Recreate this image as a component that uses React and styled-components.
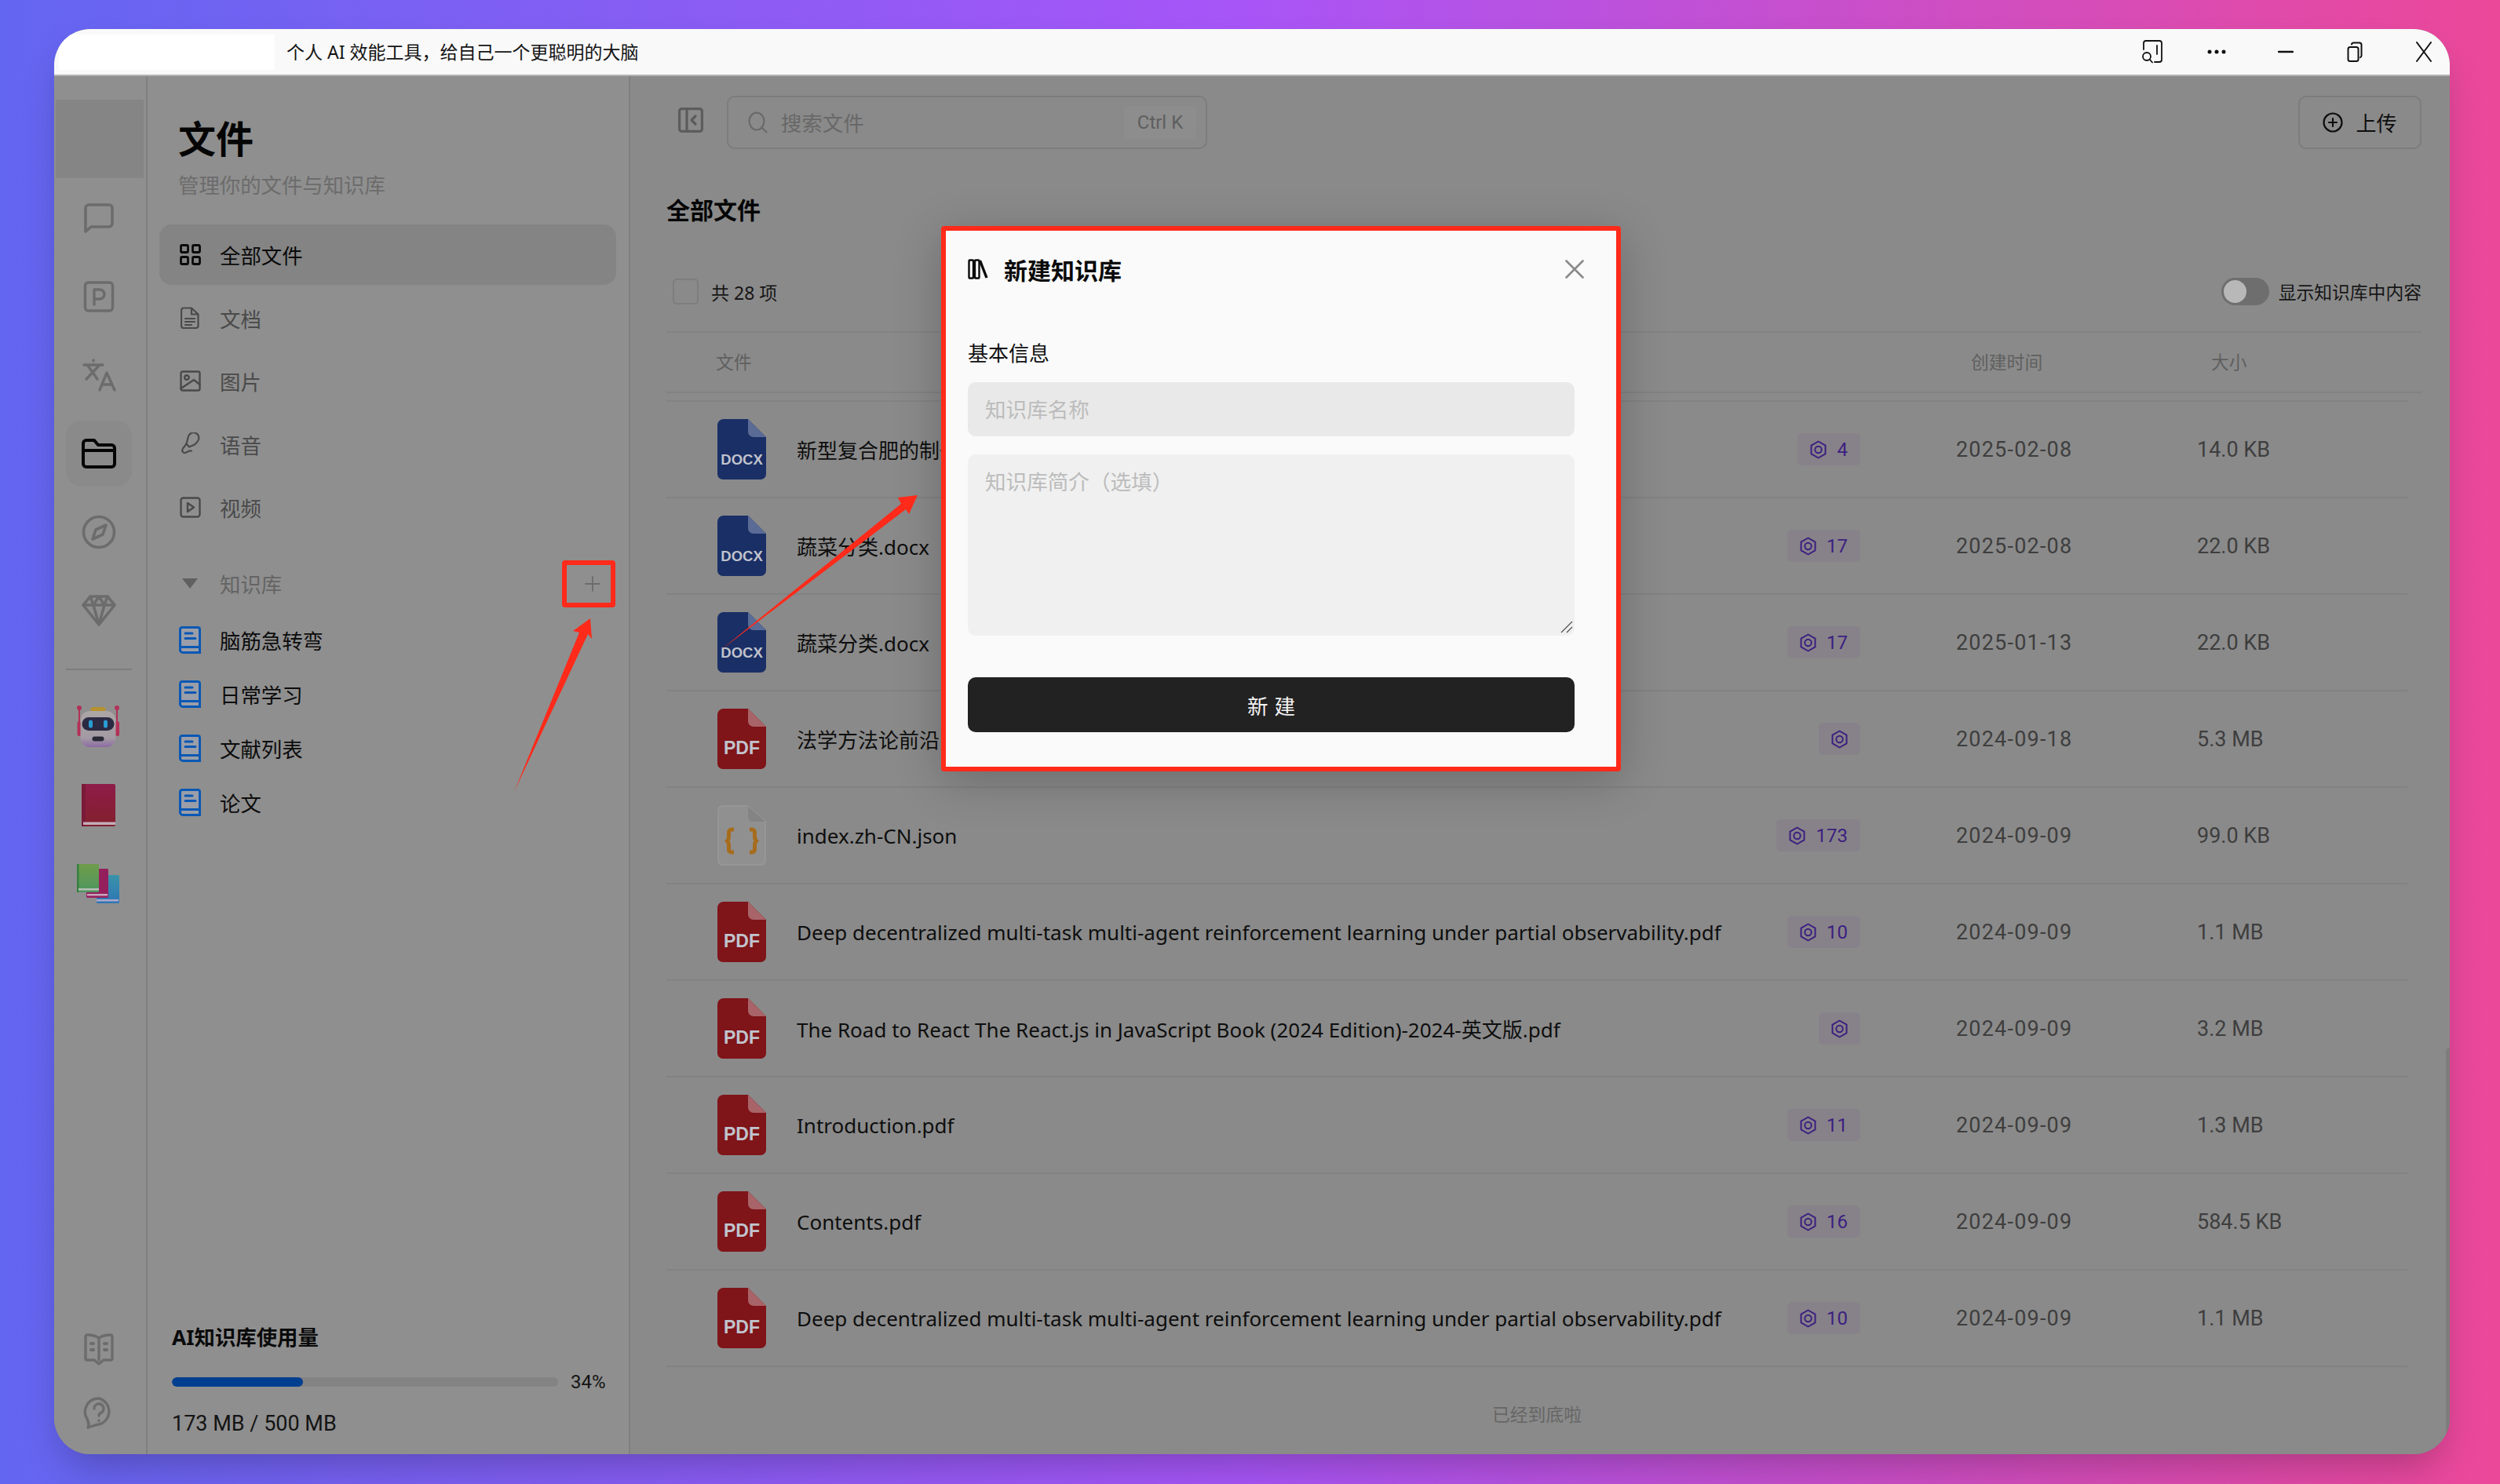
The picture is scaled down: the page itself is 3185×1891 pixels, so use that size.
import React from "react";
import styled, { createGlobalStyle } from "styled-components";

const Global = createGlobalStyle`
  html, body { margin: 0; padding: 0; }
  body { font-family: "Noto Sans", "Noto Sans CJK SC", sans-serif; color: #111; }
  * { box-sizing: border-box; }
`;

const Stage = styled.div`
  position: relative;
  width: 3185px;
  height: 1891px;
  padding: 37px 64px 38px 69px;
  background: linear-gradient(to right, #6366f1, #a855f7, #ec4899);
  overflow: hidden;
`;
const Win = styled.div`
  height: 100%;
  display: flex;
  flex-direction: column;
  border-radius: 46px;
  overflow: hidden;
  background: #8a8a8a;
  box-shadow: 0 25px 50px -12px rgba(0, 0, 0, 0.25);
`;
const TitleBar = styled.header`
  height: 60px;
  flex: none;
  display: flex;
  align-items: center;
  background: #f9f9f9;
  border-bottom: 2px solid #b4b4b4;
  padding-right: 19px;
`;
const Redact = styled.div`
  width: 275px;
  height: 45px;
  margin: 0 15px 0 6px;
  background: #fff;
`;
const Slogan = styled.div`
  flex: 1;
  font-size: 23px;
  line-height: 32px;
  color: #141414;
`;
const WinBtns = styled.div`
  display: flex;
  align-items: center;
  gap: 60px;
`;
const WinBtn = styled.span`
  width: 28px;
  height: 30px;
  display: flex;
  align-items: center;
  justify-content: center;
  color: #111;
  &:first-child { margin-right: -6px; }
`;

const Body = styled.div`
  flex: 1;
  min-height: 0;
  display: flex;
`;

const Rail = styled.nav`
  width: 119px;
  flex: none;
  background: #8f8f8f;
  border-right: 2px solid #7f7f7f;
  padding: 30px 4px 13px 0;
  display: flex;
  flex-direction: column;
  align-items: center;
`;
const RailLogo = styled.div`
  width: 112px;
  height: 100px;
  flex: none;
  background: #858585;
  margin: 0 0 1px 3px;
`;
const RailSlot = styled.div`
  width: 84px;
  height: ${(p) => p.$h || 100}px;
  display: flex;
  align-items: center;
  justify-content: center;
  color: #6c6c6c;
  flex: none;
`;
const RailActive = styled.div`
  width: 84px;
  height: 84px;
  border-radius: 20px;
  background: #8a8a8a;
  display: flex;
  align-items: center;
  justify-content: center;
  color: #050505;
`;
const RailDivider = styled.div`
  width: 84px;
  height: 2px;
  background: #7d7d7d;
  margin: 24px 0 22px;
  flex: none;
`;
const RailBottom = styled.div`
  margin-top: auto;
  display: flex;
  flex-direction: column;
`;

const Side = styled.aside`
  width: 615px;
  flex: none;
  background: #8f8f8f;
  border-right: 2px solid #7f7f7f;
  padding: 50px 16px 21px 15px;
  display: flex;
  flex-direction: column;
`;
const SideTitle = styled.h1`
  margin: 0 0 0 24px;
  font-size: 48px;
  line-height: 60px;
  font-weight: 700;
  color: #050505;
`;
const SideSub = styled.p`
  margin: 11px 0 32px 24px;
  font-size: 26.4px;
  line-height: 36px;
  color: #6c6c6c;
`;
const NavItem = styled.div`
  height: 77px;
  margin-bottom: 3.6px;
  border-radius: 16px;
  padding-left: 25px;
  display: flex;
  align-items: center;
  gap: 24px;
  font-size: 26.4px;
  background: ${(p) => (p.$active ? "#848484" : "transparent")};
  color: ${(p) => (p.$active ? "#0a0a0a" : "#4a4a4a")};
`;
const IconSlot = styled.span`
  width: 28px;
  height: 36px;
  flex: none;
  display: flex;
  align-items: center;
  justify-content: center;
`;
const KbHead = styled.div`
  height: 60px;
  margin-top: 25px;
  margin-bottom: 7px;
  padding-left: 25px;
  display: flex;
  align-items: center;
  gap: 24px;
  font-size: 26.4px;
  color: #646464;
`;
const KbName = styled.span`
  flex: 1;
`;
const AddBox = styled.span`
  width: 68px;
  height: 60px;
  margin-right: 1px;
  border: 6px solid #ff2a1a;
  border-radius: 4px;
  display: flex;
  align-items: center;
  justify-content: center;
  padding-left: 10px;
  color: #6c6c6c;
`;
const KbItem = styled.div`
  height: 69px;
  padding-left: 25px;
  display: flex;
  align-items: center;
  gap: 24px;
  font-size: 26.4px;
  color: #0c0c0c;
`;
const Usage = styled.div`
  margin-top: auto;
  padding-left: 16px;
`;
const UsageTitle = styled.div`
  font-size: 26.4px;
  line-height: 36px;
  font-weight: 700;
  color: #0a0a0a;
`;
const UsageRow = styled.div`
  height: 30px;
  margin-top: 24px;
  display: flex;
  align-items: center;
  gap: 16px;
`;
const Track = styled.div`
  width: 492px;
  height: 12px;
  border-radius: 6px;
  background: #838383;
  overflow: hidden;
`;
const Fill = styled.div`
  height: 100%;
  border-radius: 6px;
  background: #003f8f;
`;
const Pct = styled.span`
  font-family: Roboto, sans-serif;
  font-size: 24px;
  color: #141414;
`;
const UsageTotal = styled.div`
  margin-top: 20px;
  font-family: Roboto, sans-serif;
  font-size: 27px;
  line-height: 36px;
  color: #141414;
`;

const Main = styled.main`
  position: relative;
  flex: 1;
  min-width: 0;
  background: #8a8a8a;
  padding: 25px 36px 0 46px;
  display: flex;
  flex-direction: column;
`;
const TopBar = styled.div`
  height: 68px;
  display: flex;
  align-items: center;
`;
const PanelBtn = styled.span`
  width: 32px;
  margin: -6px 30px 0 15px;
  height: 32px;
  color: #5c5c5c;
  display: flex;
`;
const Search = styled.div`
  width: 612px;
  height: 68px;
  border: 2px solid #7c7c7c;
  border-radius: 10px;
  padding: 0 12px 0 25px;
  display: flex;
  align-items: center;
  gap: 17px;
  font-size: 26.4px;
  color: #686868;
`;
const SearchText = styled.span`
  flex: 1;
  margin-top: -2px;
`;
const Kbd = styled.span`
  width: 92px;
  height: 42px;
  background: #8d8d8d;
  border-radius: 6px;
  display: flex;
  align-items: center;
  justify-content: center;
  font-family: Roboto, sans-serif;
  font-size: 24px;
  color: #5e5e5e;
`;
const Upload = styled.button`
  margin-left: auto;
  width: 157px;
  height: 68px;
  border: 2.5px solid #7c7c7c;
  border-radius: 10px;
  background: transparent;
  display: flex;
  align-items: center;
  justify-content: center;
  gap: 16px;
  font: inherit;
  font-size: 26px;
  color: #0e0e0e;
  padding: 0;
`;
const Heading = styled.h2`
  margin: 58px 0 0;
  font-size: 30px;
  line-height: 40px;
  font-weight: 700;
  color: #050505;
`;
const CountRow = styled.div`
  height: 35px;
  margin-top: 66px;
  padding-left: 8px;
  display: flex;
  align-items: center;
`;
const Check = styled.span`
  width: 33px;
  height: 33px;
  border: 2px solid #7d7d7d;
  border-radius: 5px;
  margin-right: 16px;
`;
const CountText = styled.span`
  flex: 1;
  font-size: 23px;
  color: #161616;
`;
const ToggleTrack = styled.span`
  width: 61px;
  height: 35px;
  border-radius: 18px;
  background: #6e6e6e;
  padding: 3px;
  margin-right: 12px;
  display: flex;
`;
const Knob = styled.span`
  width: 29px;
  height: 29px;
  border-radius: 50%;
  background: #b8b8b8;
`;
const ToggleLabel = styled.span`
  font-size: 22.8px;
  color: #161616;
`;
const Header = styled.div`
  height: 79px;
  margin-top: 33px;
  padding-bottom: 3px;
  border-top: 2px solid #828282;
  border-bottom: 2px solid #828282;
  display: grid;
  grid-template-columns: 1fr 122px 307px 286px;
  align-items: center;
  font-size: 22.8px;
  color: #606060;
`;
const HeadName = styled.span`
  padding-left: 63px;
`;
const HeadDate = styled.span`
  grid-column: 3;
  padding-left: 19px;
`;
const HeadSize = styled.span`
  padding-left: 18px;
`;
const List = styled.div`
  margin-top: 9px;
  margin-right: 18px;
  border-top: 2px solid #828282;
`;
const Row = styled.div`
  height: 123px;
  border-bottom: 2px solid #828282;
  display: grid;
  grid-template-columns: 1fr 122px 307px 268px;
  align-items: center;
  color: #3e3e3e;
`;
const NameCell = styled.div`
  display: flex;
  align-items: center;
  justify-content: space-between;
  padding-left: 65px;
  min-width: 0;
`;
const NameWrap = styled.div`
  display: flex;
  align-items: center;
  gap: 39px;
  min-width: 0;
`;
const FileName = styled.span`
  font-size: 26px;
  color: #0e0e0e;
  white-space: nowrap;
`;
const Tag = styled.span`
  height: 41px;
  padding: 0 16px;
  border-radius: 6px;
  background: #878289;
  color: #3c1f80;
  display: flex;
  align-items: center;
  gap: 13px;
  font-family: Roboto, sans-serif;
  font-size: 24px;
  flex: none;
`;
const DateCell = styled.span`
  grid-column: 3;
  font-family: Roboto, sans-serif;
  font-size: 27px;
  letter-spacing: 1.2px;
`;
const Size = styled.span`
  font-family: Roboto, sans-serif;
  font-size: 27px;
`;
const EndNote = styled.div`
  text-align: center;
  margin-top: 43px;
  margin-right: 18px;
  font-size: 22.8px;
  color: #666;
`;
const Thumb = styled.div`
  position: absolute;
  right: 0;
  top: 1238px;
  bottom: 0;
  width: 5px;
  border-radius: 5px 0 0 0;
  background: #7d7d7d;
`;

const ModalBox = styled.section`
  position: absolute;
  left: 1199px;
  top: 288px;
  width: 866px;
  height: 695px;
  border: 6px solid #ff2a1a;
  border-radius: 4px;
  background: #fafafa;
  padding: 29px 53px 0 28px;
  box-shadow: 0 12px 60px rgba(0, 0, 0, 0.22);
`;
const ModalHead = styled.div`
  height: 40px;
  display: flex;
  align-items: center;
  gap: 20px;
`;
const ModalTitle = styled.h3`
  flex: 1;
  margin: 0;
  font-size: 30px;
  font-weight: 700;
  color: #0a0a0a;
`;
const CloseIcon = styled.svg`
  margin-right: -12px;
`;
const SectionLabel = styled.div`
  margin-top: 69px;
  font-size: 26px;
  line-height: 36px;
  color: #111;
`;
const NameInput = styled.input`
  display: block;
  width: 100%;
  height: 69px;
  margin-top: 19px;
  padding: 0 22px;
  border: 0;
  border-radius: 10px;
  background: #e9e9e9;
  font: inherit;
  font-size: 26.6px;
  outline: none;
  &::placeholder { color: #bcbcbc; opacity: 1; }
`;
const IntroWrap = styled.div`
  position: relative;
  height: 231px;
  margin-top: 23px;
`;
const Intro = styled.textarea`
  display: block;
  width: 100%;
  height: 100%;
  padding: 17px 22px;
  border: 0;
  border-radius: 10px;
  background: #f0f0f0;
  font: inherit;
  font-size: 26.6px;
  line-height: 36px;
  outline: none;
  resize: none;
  &::placeholder { color: #bcbcbc; opacity: 1; }
`;
const Grip = styled.svg`
  position: absolute;
  right: 2px;
  bottom: 3px;
`;
const Submit = styled.button`
  display: block;
  width: 100%;
  height: 70px;
  margin-top: 53px;
  border: 0;
  border-radius: 10px;
  background: #222;
  color: #f2f2f2;
  font: inherit;
  font-size: 26.6px;
  letter-spacing: 8px;
  padding: 0 0 0 8px;
`;
const Arrows = styled.svg`
  position: absolute;
  left: 0;
  top: 0;
  pointer-events: none;
`;

const S = ({ w = 36, h = 36, vb = "0 0 24 24", sw = 2, children, fill = "none" }) => (
  <svg width={w} height={h} viewBox={vb} fill={fill} stroke="currentColor" strokeWidth={sw} strokeLinecap="round" strokeLinejoin="round">
    {children}
  </svg>
);

const Chat = () => (
  <S w={40} h={40} vb="0 0 40 40" sw={3.6}><path d="M3 37V7a4 4 0 0 1 4-4h26a4 4 0 0 1 4 4v20a4 4 0 0 1-4 4H10z" /></S>
);
const PBox = () => (
  <S w={40} h={40} vb="0 0 40 40" sw={3.4}><rect x="2.5" y="2" width="35" height="36" rx="4" /><path d="M14 30V11h7a5.5 5.5 0 0 1 0 12h-7" /></S>
);
const Translate = () => (
  <S w={44} h={44} vb="0 0 44 44" sw={3.4}>
    <path d="M3 9h24M15 3v1M8 10l12 17M22 10 6 27" />
    <path d="M23 41 32 19l10 22M26 34h13" />
  </S>
);
const Folder = () => (
  <S w={44} h={38} vb="0 0 44 38" sw={4}>
    <path d="M2 9V6a4 4 0 0 1 4-4h10l5 6h17a4 4 0 0 1 4 4v20a4 4 0 0 1-4 4H6a4 4 0 0 1-4-4z" />
    <path d="M2 15h40" />
  </S>
);
const Compass = () => (
  <S w={44} h={44} vb="0 0 44 44" sw={3.6}>
    <circle cx="22" cy="22" r="19.5" />
    <path d="M31 13l-4 12-13 6 4-12z" />
  </S>
);
const Gem = () => (
  <S w={44} h={42} vb="0 0 44 42" sw={3.6}>
    <path d="M11 3h22l9 11-20 25L2 14zM2 14h40M15 14l7 25 7-25M11 3l4 11 7-11 7 11 4-11" />
  </S>
);
const OpenBook = () => (
  <S w={38} h={42} vb="0 0 38 42" sw={3.4}>
    <path d="M19 6c-4-3-10-4-15-4a2 2 0 0 0-2 2v28a2 2 0 0 0 2 2h9l6 5 6-5h9a2 2 0 0 0 2-2V4a2 2 0 0 0-2-2c-5 0-11 1-15 4zM19 6v28" />
    <path d="M9 13h3M9 21h3M26 13h3M26 21h3" strokeWidth="4" />
  </S>
);
const Help = () => (
  <S w={40} h={42} vb="0 0 40 42" sw={3.4}>
    <path d="M20 3a17 17 0 0 1 0 33c-4 0-9 3-14 4 2-3 1-6-1-11A17 17 0 0 1 20 3z" />
    <path d="M14 16a6 6 0 1 1 9 5c-2 1-3 2-3 4M20 31v.2" />
  </S>
);

const GridIc = () => (
  <S w={27} h={27} vb="0 0 27 27" sw={2.8}>
    <rect x="1.5" y="1.5" width="9" height="9" rx="1.5" /><rect x="16.5" y="1.5" width="9" height="9" rx="1.5" />
    <rect x="1.5" y="16.5" width="9" height="9" rx="1.5" /><rect x="16.5" y="16.5" width="9" height="9" rx="1.5" />
  </S>
);
const DocIc = () => (
  <S w={24} h={28} vb="0 0 24 28" sw={2.2}>
    <path d="M4 1.5h10l8.5 8V24a3 3 0 0 1-3 3H4a3 3 0 0 1-3-3V4.5a3 3 0 0 1 3-3zM14 1.5v8h8.5M6 15h12M6 19h12M6 23h8" />
  </S>
);
const ImgIc = () => (
  <S w={27} h={27} vb="0 0 27 27" sw={2.4}>
    <rect x="1.5" y="1.5" width="24" height="24" rx="2" />
    <circle cx="9" cy="9" r="2.8" />
    <path d="M1.5 23 18 12l7.5 6" />
  </S>
);
const MicIc = () => (
  <S w={25} h={30} vb="0 0 25 30" sw={2.2}>
    <path d="M10 5a6.8 6.8 0 0 1 13 4c-1 3-3 5-5 6.500l-7 3-3.500-4z" />
    <path d="M7.500 14.500 3 20.500c-2 3 0 6 3 5.500 3-1 5-3 8-2.500" />
  </S>
);
const PlayIc = () => (
  <S w={27} h={27} vb="0 0 27 27" sw={2.4}>
    <rect x="1.5" y="1.5" width="24" height="24" rx="3" />
    <path d="M10 8l8 5.500-8 5.500z" />
  </S>
);
const KbIcon = () => (
  <svg width="28" height="35" viewBox="0 0 28 35" fill="none">
    <path d="M4 1.5h20a2.5 2.5 0 0 1 2.500 2.500v29.500H5A3.500 3.500 0 0 1 1.500 30V4A2.500 2.500 0 0 1 4 1.500z" fill="#9a9ea8" stroke="#0a58b4" strokeWidth="3" />
    <path d="M2 26.500h24.500" stroke="#0a58b4" strokeWidth="3" />
    <path d="M8 9h9M8 15.500h13" stroke="#0a58b4" strokeWidth="3" strokeLinecap="round" />
  </svg>
);
const Hex = ({ size = 24 }) => (
  <svg width={size * 0.88} height={size} viewBox="0 0 21 24" fill="none" stroke="currentColor" strokeWidth="2" strokeLinejoin="round" style={{ flex: "none" }}>
    <path d="M10.500 1.500 19.500 6.700v10.600L10.500 22.500 1.500 17.300V6.700z" />
    <circle cx="10.500" cy="12" r="4.200" />
  </svg>
);
const FileIcon = ({ kind }) => {
  const c = { docx: ["#1a2f66", "#5a6c95", "DOCX", 18.5], pdf: ["#7f1419", "#a86468", "PDF", 23] }[kind];
  if (!c) {
    return (
      <svg width="62" height="77" viewBox="0 0 62 77" style={{ flex: "none" }}>
        <path d="M7 1h32l22 20v49a6 6 0 0 1-6 6H7a6 6 0 0 1-6-6V7a6 6 0 0 1 6-6z" fill="#909090" stroke="#969696" strokeWidth="2" />
        <path d="M39 1l22 20H45a6 6 0 0 1-6-6z" fill="#848484" />
        <path d="M21 31h-3a3.500 3.500 0 0 0-3.500 3.500v6c0 3-2 5-2 5s2 2 2 5v6a3.500 3.500 0 0 0 3.500 3.500h3M41 31h3a3.500 3.500 0 0 1 3.500 3.500v6c0 3 2 5 2 5s-2 2-2 5v6a3.500 3.500 0 0 1-3.500 3.500h-3" fill="none" stroke="#a66c1c" strokeWidth="5" />
      </svg>
    );
  }
  return (
    <svg width="62" height="77" viewBox="0 0 62 77" style={{ flex: "none" }}>
      <path d="M8 0h31l23 23v47a7 7 0 0 1-7 7H7a7 7 0 0 1-7-7V8a8 8 0 0 1 8-8z" fill={c[0]} />
      <path d="M39 0l23 23H46a7 7 0 0 1-7-7z" fill={c[1]} />
      <text x="31" y="58" textAnchor="middle" fontFamily="Liberation Sans, sans-serif" fontWeight="700" fontSize={c[3]} fill="#c0c3cc">{c[2]}</text>
    </svg>
  );
};
const Robot = () => (
  <svg width="55" height="55" viewBox="0 0 55 55">
    <defs>
      <linearGradient id="rb" x1="0" y1="0" x2="0" y2="1"><stop offset="0" stopColor="#ada6a6" /><stop offset="0.75" stopColor="#a39aa3" /><stop offset="1" stopColor="#8d6aa4" /></linearGradient>
    </defs>
    <path d="M3 4v30M51 4v30" stroke="#b23158" strokeWidth="2" />
    <circle cx="3" cy="3" r="3" fill="#b23158" /><circle cx="51" cy="3" r="3" fill="#b23158" />
    <rect x="0.5" y="20" width="5" height="19" rx="2.500" fill="#b23158" />
    <rect x="49" y="20" width="5" height="19" rx="2.500" fill="#b23158" />
    <rect x="17.500" y="2" width="19" height="7" rx="3.500" fill="#b5922c" />
    <rect x="4.500" y="7" width="45" height="46" rx="12" fill="url(#rb)" />
    <rect x="6.500" y="15" width="41" height="17" rx="8.500" fill="#2b2a42" />
    <rect x="15" y="18.500" width="5" height="10" rx="2.500" fill="#2a9cd4" />
    <rect x="34" y="18.500" width="5" height="10" rx="2.500" fill="#2a9cd4" />
    <rect x="19.500" y="39.500" width="15" height="6" rx="3" fill="#2a2834" />
  </svg>
);
const RedBook = () => (
  <svg width="43" height="55" viewBox="0 0 43 55">
    <defs>
      <linearGradient id="rd" x1="0" y1="0" x2="0" y2="1"><stop offset="0" stopColor="#8f1c49" /><stop offset="1" stopColor="#82202c" /></linearGradient>
    </defs>
    <rect width="43" height="54" rx="2" fill="url(#rd)" />
    <rect width="5" height="54" fill="#7a1a38" />
    <rect x="2" y="48.500" width="41" height="3.500" fill="#c2adba" />
  </svg>
);
const Books = () => (
  <svg width="55" height="50" viewBox="0 0 55 50">
    <defs>
      <linearGradient id="bb" x1="0" y1="0" x2="0" y2="1"><stop offset="0" stopColor="#3a93a9" /><stop offset="1" stopColor="#2d75b5" /></linearGradient>
      <linearGradient id="gb" x1="0" y1="0" x2="0" y2="1"><stop offset="0" stopColor="#6f9c4a" /><stop offset="1" stopColor="#4d9660" /></linearGradient>
    </defs>
    <rect x="25" y="14" width="29" height="36" rx="1.500" fill="url(#bb)" />
    <rect x="25" y="45" width="28" height="2.500" fill="#b0a7ca" />
    <rect x="12" y="6" width="28" height="37" rx="1.500" fill="#951f5d" />
    <rect x="13" y="38" width="26" height="2.500" fill="#c6a6bc" />
    <rect width="28" height="36" rx="1.500" fill="url(#gb)" />
    <rect width="2.500" height="36" fill="#36803f" />
    <rect x="2" y="31" width="26" height="2.500" fill="#b8bfb8" />
  </svg>
);

const files = [
  ["docx", "新型复合肥的制备方法与应用研究.docx", "4", "2025-02-08", "14.0 KB"],
  ["docx", "蔬菜分类.docx", "17", "2025-02-08", "22.0 KB"],
  ["docx", "蔬菜分类.docx", "17", "2025-01-13", "22.0 KB"],
  ["pdf", "法学方法论前沿问题研究.pdf", "", "2024-09-18", "5.3 MB"],
  ["json", "index.zh-CN.json", "173", "2024-09-09", "99.0 KB"],
  ["pdf", "Deep decentralized multi-task multi-agent reinforcement learning under partial observability.pdf", "10", "2024-09-09", "1.1 MB"],
  ["pdf", "The Road to React The React.js in JavaScript Book (2024 Edition)-2024-英文版.pdf", "", "2024-09-09", "3.2 MB"],
  ["pdf", "Introduction.pdf", "11", "2024-09-09", "1.3 MB"],
  ["pdf", "Contents.pdf", "16", "2024-09-09", "584.5 KB"],
  ["pdf", "Deep decentralized multi-task multi-agent reinforcement learning under partial observability.pdf", "10", "2024-09-09", "1.1 MB"],
];
const navs = [
  [GridIc, "全部文件", true],
  [DocIc, "文档"],
  [ImgIc, "图片"],
  [MicIc, "语音"],
  [PlayIc, "视频"],
];
const kbs = ["脑筋急转弯", "日常学习", "文献列表", "论文"];

export default function App() {
  return (
    <Stage>
      <Global />
      <Win>
        <TitleBar>
          <Redact />
          <Slogan>个人 AI 效能工具，给自己一个更聪明的大脑</Slogan>
          <WinBtns>
            <WinBtn>
              <S w={28} h={30} vb="0 0 28 30" sw={1.8}>
                <path d="M3 12V4a3 3 0 0 1 3-3h17a3 3 0 0 1 3 3v21a3 3 0 0 1-3 3h-6M20 7v11" />
                <circle cx="7" cy="21" r="5" /><path d="M11 25l3 3.500" />
              </S>
            </WinBtn>
            <WinBtn>
              <svg width="24" height="6" viewBox="0 0 24 6" fill="currentColor"><circle cx="3" cy="3" r="2.500" /><circle cx="12" cy="3" r="2.500" /><circle cx="21" cy="3" r="2.500" /></svg>
            </WinBtn>
            <WinBtn><S w={20} h={4} vb="0 0 20 4" sw={2.4}><path d="M1 2h18" /></S></WinBtn>
            <WinBtn>
              <S w={20} h={26} vb="0 0 20 26" sw={2}><rect x="1.500" y="7" width="13" height="18" rx="2.500" /><path d="M6 3.500a2.500 2.500 0 0 1 2.500-2H16a2.500 2.500 0 0 1 2.500 2.500v14a2.500 2.500 0 0 1-1.500 2.200" /></S>
            </WinBtn>
            <WinBtn><S w={20} h={26} vb="0 0 20 26" sw={2}><path d="M1 1l18 24M19 1 1 25" /></S></WinBtn>
          </WinBtns>
        </TitleBar>
        <Body>
          <Rail>
            <RailLogo />
            <RailSlot><Chat /></RailSlot>
            <RailSlot><PBox /></RailSlot>
            <RailSlot><Translate /></RailSlot>
            <RailSlot><RailActive><Folder /></RailActive></RailSlot>
            <RailSlot><Compass /></RailSlot>
            <RailSlot><Gem /></RailSlot>
            <RailDivider />
            <RailSlot><Robot /></RailSlot>
            <RailSlot><RedBook /></RailSlot>
            <RailSlot><Books /></RailSlot>
            <RailBottom>
              <RailSlot $h={80}><OpenBook /></RailSlot>
              <RailSlot $h={80}><Help /></RailSlot>
            </RailBottom>
          </Rail>
          <Side>
            <SideTitle>文件</SideTitle>
            <SideSub>管理你的文件与知识库</SideSub>
            {navs.map(([I, t, a]) => (
              <NavItem key={t} $active={a}>
                <IconSlot><I /></IconSlot>
                {t}
              </NavItem>
            ))}
            <KbHead>
              <IconSlot>
                <svg width="20" height="13" viewBox="0 0 20 13"><path d="M0 0h20L10 13z" fill="#606060" /></svg>
              </IconSlot>
              <KbName>知识库</KbName>
              <AddBox><S w={20} h={20} vb="0 0 20 20" sw={1.8}><path d="M10 1v18M1 10h18" /></S></AddBox>
            </KbHead>
            {kbs.map((k) => (
              <KbItem key={k}><IconSlot><KbIcon /></IconSlot>{k}</KbItem>
            ))}
            <Usage>
              <UsageTitle>AI知识库使用量</UsageTitle>
              <UsageRow>
                <Track><Fill style={{ width: "34%" }} /></Track>
                <Pct>34%</Pct>
              </UsageRow>
              <UsageTotal>173 MB / 500 MB</UsageTotal>
            </Usage>
          </Side>
          <Main>
            <TopBar>
              <PanelBtn>
                <S w={32} h={32} vb="0 0 32 32" sw={3.2}>
                  <rect x="1.600" y="1.600" width="28.800" height="28.800" rx="3" />
                  <path d="M11 2v28M22 11l-5 5 5 5" />
                </S>
              </PanelBtn>
              <Search>
                <S w={25} h={28} vb="0 0 25 28" sw={2}><ellipse cx="11" cy="12.500" rx="9.500" ry="11" /><path d="M18 21l5.500 5.500" /></S>
                <SearchText>搜索文件</SearchText>
                <Kbd>Ctrl K</Kbd>
              </Search>
              <Upload>
                <S w={26} h={26} vb="0 0 26 26" sw={2.2}><circle cx="13" cy="13" r="11.500" /><path d="M13 8v10M8 13h10" /></S>
                上传
              </Upload>
            </TopBar>
            <Heading>全部文件</Heading>
            <CountRow>
              <Check />
              <CountText>共 28 项</CountText>
              <ToggleTrack><Knob /></ToggleTrack>
              <ToggleLabel>显示知识库中内容</ToggleLabel>
            </CountRow>
            <Header>
              <HeadName>文件</HeadName>
              <HeadDate>创建时间</HeadDate>
              <HeadSize>大小</HeadSize>
            </Header>
            <List>
              {files.map(([kind, name, count, date, size], i) => (
                <Row key={i}>
                  <NameCell>
                    <NameWrap><FileIcon kind={kind} /><FileName>{name}</FileName></NameWrap>
                    <Tag><Hex />{count && <span>{count}</span>}</Tag>
                  </NameCell>
                  <DateCell>{date}</DateCell>
                  <Size>{size}</Size>
                </Row>
              ))}
            </List>
            <EndNote>已经到底啦</EndNote>
            <Thumb />
          </Main>
        </Body>
      </Win>

      <ModalBox>
        <ModalHead>
          <svg width="26" height="26" viewBox="0 0 26 26" fill="none" stroke="#0a0a0a" strokeWidth="2.400" strokeLinejoin="round">
            <rect x="1.500" y="1.500" width="5.500" height="23" rx="1" /><rect x="9" y="1.500" width="5.500" height="23" rx="1" /><path d="M15.500 2l8.500 22" strokeWidth="3.400" />
          </svg>
          <ModalTitle>新建知识库</ModalTitle>
          <CloseIcon width="24" height="24" viewBox="0 0 24 24" fill="none" stroke="#8a8a8a" strokeWidth="2.600" strokeLinecap="round"><path d="M1.500 1.500l21 21M22.500 1.500l-21 21" /></CloseIcon>
        </ModalHead>
        <SectionLabel>基本信息</SectionLabel>
        <NameInput placeholder="知识库名称" />
        <IntroWrap>
          <Intro placeholder="知识库简介（选填）" />
          <Grip width="16" height="16" viewBox="0 0 16 16" fill="none" stroke="#555" strokeWidth="1.300"><path d="M1 15 15 1M8 15l7-7" /></Grip>
        </IntroWrap>
        <Submit>新建</Submit>
      </ModalBox>

      <Arrows width="3185" height="1891" viewBox="0 0 3185 1891">
        <polygon points="655,1009 738,806 730,804 752,788 754,814 749,808" fill="#ff2a1a" />
        <polygon points="916,830 1148,642 1144,634 1169,631 1158,655 1154,649" fill="#ff2a1a" />
      </Arrows>
    </Stage>
  );
}
